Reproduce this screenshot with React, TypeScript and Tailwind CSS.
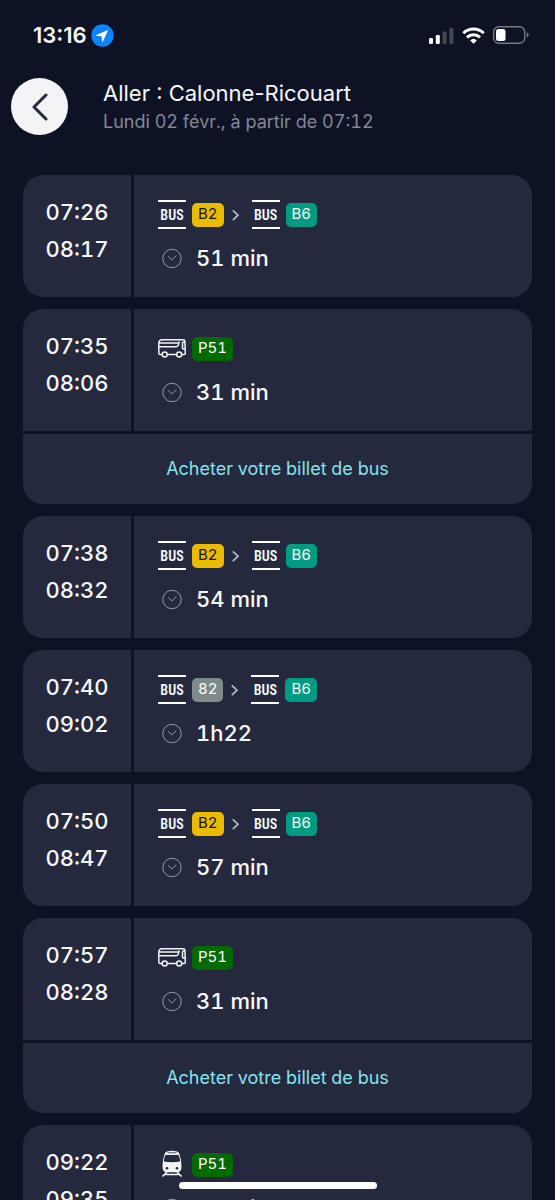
import { Fragment } from "react";

type Line = { mode: "bus" | "coach" | "train"; label: string; color: string };
type Journey = { from: string; to: string; duration: string; lines: Line[]; ticket?: boolean };

const b2: Line = { mode: "bus", label: "B2", color: "bg-[#ebbb00] text-[#15151c]" };
const b6: Line = { mode: "bus", label: "B6", color: "bg-[#009b80] text-white" };
const l82: Line = { mode: "bus", label: "82", color: "bg-[#7f8b89] text-white" };
const p51Coach: Line = { mode: "coach", label: "P51", color: "bg-[#006a00] text-white" };
const p51Train: Line = { mode: "train", label: "P51", color: "bg-[#006a00] text-white" };

const journeys: Journey[] = [
  { from: "07:26", to: "08:17", duration: "51 min", lines: [b2, b6] },
  { from: "07:35", to: "08:06", duration: "31 min", lines: [p51Coach], ticket: true },
  { from: "07:38", to: "08:32", duration: "54 min", lines: [b2, b6] },
  { from: "07:40", to: "09:02", duration: "1h22", lines: [l82, b6] },
  { from: "07:50", to: "08:47", duration: "57 min", lines: [b2, b6] },
  { from: "07:57", to: "08:28", duration: "31 min", lines: [p51Coach], ticket: true },
  { from: "09:22", to: "09:35", duration: "13 min", lines: [p51Train] },
];

const StatusBar = () => (
  <div className="flex h-[70px] shrink-0 items-center justify-between pr-[26px] pl-[33px]">
    <div className="flex items-center gap-1">
      <span className="text-[22px] font-semibold proportional-nums">13:16</span>
      <svg className="size-[23px]" viewBox="0 0 23 23" aria-hidden="true">
        <circle cx="11.5" cy="11.5" r="11.2" fill="#0a84ff" />
        <path
          d="M16.4 6.3 5.2 11.1q-.8.6.2.9l5.3.2.2 5.1q.3 1.1 1 .2L16.9 6.8q.1-.7-.5-.5Z"
          fill="#fff"
        />
      </svg>
    </div>
    <div className="flex items-center gap-2">
      <svg className="h-[17px] w-[25px]" viewBox="0 0 25 17" aria-hidden="true">
        <rect x="0" y="11" width="4" height="6" rx="1.2" fill="#fff" />
        <rect x="6.8" y="8" width="4" height="9" rx="1.2" fill="#fff" />
        <rect x="13.6" y="4.5" width="4" height="12.5" rx="1.2" fill="#434758" />
        <rect x="20.4" y="1" width="4" height="16" rx="1.2" fill="#434758" />
      </svg>
      <svg className="h-[17px] w-[23px]" viewBox="0 0 23 17" fill="none" stroke="#fff" strokeWidth="3" aria-hidden="true">
        <path d="M1.3 6.2a14.6 14.6 0 0 1 20.4 0" />
        <path d="M5 10.4a9.3 9.3 0 0 1 13 0" />
        <path d="m8.2 13.4 3.3 3.4 3.3-3.4a4.8 4.8 0 0 0-6.6 0Z" fill="#fff" stroke="none" />
      </svg>
      <svg className="h-[18px] w-9" viewBox="0 0 36 18" aria-hidden="true">
        <rect x=".7" y=".7" width="31" height="16.6" rx="5" fill="none" stroke="#747784" strokeWidth="1.4" />
        <rect x="3" y="3" width="9.5" height="12" rx="2.5" fill="#fff" />
        <path d="M33.7 6.3q2 .8 2 2.7t-2 2.7Z" fill="#747784" />
      </svg>
    </div>
  </div>
);

const BusIcon = () => (
  <span className="flex h-[29px] w-7 items-center justify-center border-y-2 border-white font-['Roboto_Condensed',Roboto,sans-serif] text-sm font-semibold">
    BUS
  </span>
);

const CoachIcon = () => (
  <svg
    className="h-[29px] w-7"
    viewBox="0 0 28 29"
    fill="none"
    stroke="#f4f4f7"
    strokeWidth="1.5"
    strokeLinejoin="round"
    aria-hidden="true"
  >
    <path d="M4.2 20.6H2.3Q.8 20.6.8 19V9.500Q.8 5.700 4 5.700h21.300q1.500 0 1.600 1.600l.4 11.700q0 1.600-1.300 1.600h-2.200M9.300 20.600h9.200" />
    <path d="M1 12.700h17.200q1.800 0 2.100-1.500l.5-2.400q.2-.8 1-.8M1 9h19.500" />
    <path d="M26.800 8h-1.400q-.9 0-.9 1v5q0 1 .9 1h1.600" />
    <circle cx="6.7" cy="20.5" r="2.5" />
    <circle cx="21.2" cy="20.5" r="2.5" />
  </svg>
);

const TrainIcon = () => (
  <svg className="h-[29px] w-7" viewBox="0 0 28 29" aria-hidden="true">
    <path
      d="M9 1.500Q14 .2 19 1.500q1.700.5 2.300 2.200 2.200 6 2.200 12.300 0 6-3.700 6.200H8.200Q4.500 22 4.500 16q0-6.300 2.200-12.300Q7.300 2 9 1.500Z"
      fill="#f4f4f7"
    />
    <path d="M9.5 2.8h9" stroke="#24293d" strokeWidth=".8" />
    <path
      d="M8 5h12q.7 0 .9.700 1 2.500 1.200 5 0 1-1 1.100-7.100.9-14.200 0-1-.1-1-1.100.2-2.500 1.200-5Q7.300 5 8 5Z"
      fill="#24293d"
    />
    <circle cx="9" cy="18.3" r="1.3" fill="#24293d" />
    <circle cx="19" cy="18.3" r="1.3" fill="#24293d" />
    <path d="m9 22-4.500 4.500M19 22l4.500 4.500M8 24.500h12" stroke="#f4f4f7" strokeWidth="1.7" />
  </svg>
);

const icons = { bus: BusIcon, coach: CoachIcon, train: TrainIcon };

const LineBadge = ({ line }: { line: Line }) => {
  const Icon = icons[line.mode];
  return (
    <span className="flex items-center gap-1.5">
      <Icon />
      <span className={`flex h-6 items-center rounded-[5px] px-1.5 text-[15px] ${line.color}`}>{line.label}</span>
    </span>
  );
};

const JourneyCard = ({ journey }: { journey: Journey }) => (
  <li className="flex shrink-0 flex-col gap-[3px] overflow-hidden rounded-[20px]">
    <div className="flex gap-[3px]">
      <div className="w-27 shrink-0 bg-[#24293d] pt-[19px] pb-[29px] text-center text-[22px] leading-[37px] font-medium">
        <p>{journey.from}</p>
        <p>{journey.to}</p>
      </div>
      <div className="flex grow flex-col gap-3 bg-[#24293d] px-6 pt-[25px]">
        <div className="flex items-center">
          {journey.lines.map((line, i) => (
            <Fragment key={i}>
              {i > 0 && (
                <svg
                  className="mr-[13px] ml-2 h-3 w-[7px]"
                  viewBox="0 0 7 12"
                  fill="none"
                  stroke="#b4b6c0"
                  strokeWidth="1.8"
                  aria-hidden="true"
                >
                  <path d="m.8 1.300 5.200 4.900-5.200 4.900" />
                </svg>
              )}
              <LineBadge line={line} />
            </Fragment>
          ))}
        </div>
        <div className="flex items-center gap-3.5 pl-1">
          <svg className="size-5" viewBox="0 0 20 20" fill="none" stroke="#9699a6" aria-hidden="true">
            <circle cx="10" cy="10.5" r="9.2" />
            <path d="m6.200 8.300 3.500 3.700 4.700-4.500" />
          </svg>
          <span className="text-[22px] leading-[34px] font-medium">{journey.duration}</span>
        </div>
      </div>
    </div>
    {journey.ticket && (
      <a href="#billet" className="flex h-[70px] items-center justify-center bg-[#24293d] text-lg text-[#86e3f0]">
        Acheter votre billet de bus
      </a>
    )}
  </li>
);

export default function App() {
  return (
    <div className="relative flex h-screen flex-col overflow-hidden bg-[#0d1224] font-[Inter,sans-serif] text-[#f8f8fb] tabular-nums">
      <StatusBar />
      <header className="flex shrink-0 items-start gap-[35px] px-[11px] pt-2 pb-[39px]">
        <button
          type="button"
          aria-label="Retour"
          className="flex size-[57px] shrink-0 items-center justify-center rounded-full bg-[#f4f4f6]"
        >
          <svg
            className="h-7 w-4"
            viewBox="0 0 16 28"
            fill="none"
            stroke="#24293d"
            strokeWidth="3"
            strokeLinecap="round"
            strokeLinejoin="round"
            aria-hidden="true"
          >
            <path d="M14 2 2 14l12 12" />
          </svg>
        </button>
        <div>
          <h1 className="text-[22px] leading-[30px] proportional-nums">Aller : Calonne-Ricouart</h1>
          <p className="text-lg leading-7 text-[#858894]">Lundi 02 févr., à partir de 07:12</p>
        </div>
      </header>
      <main className="grow overflow-y-auto px-[23px] [scrollbar-width:none]">
        <ul className="flex flex-col gap-3">
          {journeys.map((journey) => (
            <JourneyCard key={journey.from} journey={journey} />
          ))}
        </ul>
      </main>
      <div className="absolute bottom-[11px] left-1/2 h-[7px] w-[198px] -translate-x-1/2 rounded-full bg-white" />
    </div>
  );
}
